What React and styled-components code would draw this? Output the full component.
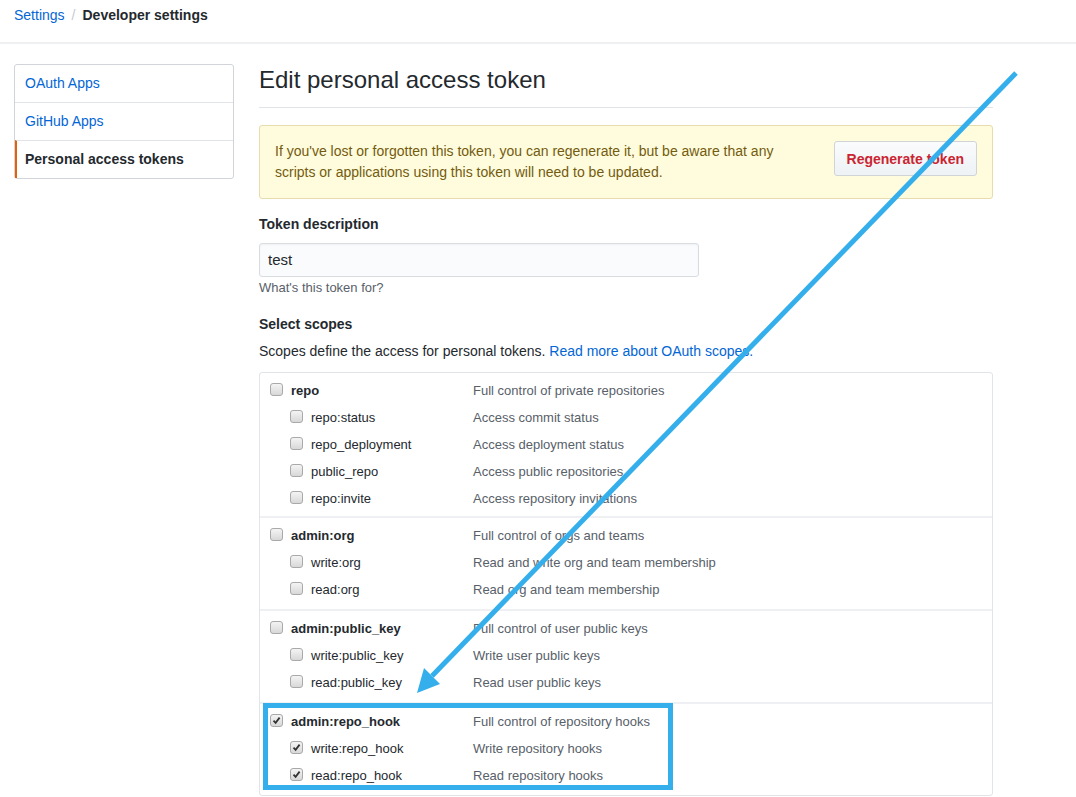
import React from 'react'
import styled, { createGlobalStyle } from 'styled-components'

const GlobalStyle = createGlobalStyle`
  html, body {
    margin: 0;
    background: #fff;
    font-family: "Liberation Sans", Arial, sans-serif;
    font-size: 14px;
    color: #24292e;
  }
`;

const Page = styled.div`
  position: relative;
  width: 1076px;
  min-height: 797px;
  overflow: hidden;
`;

const Breadcrumb = styled.div`
  height: 44px;
  padding: 5px 14px 0;
  box-sizing: border-box;
  line-height: 20px;
  font-size: 14px;
  border-bottom: 2px solid #eff0f2;
`;

const Crumb = styled.a`
  color: #0366d6;
  text-decoration: none;
`;

const Sep = styled.span`
  color: #c6cbd1;
  margin: 0 7px;
`;

const Current = styled.strong`
  color: #24292e;
`;

const Container = styled.div`
  display: flex;
  gap: 25px;
  padding: 20px 0 0 14px;
`;

const SideNav = styled.nav`
  width: 218px;
  align-self: flex-start;
  border: 1px solid #d1d5da;
  border-radius: 3px;
`;

const NavItem = styled.a`
  display: block;
  height: 37px;
  line-height: 36px;
  padding-left: ${p => (p.$active ? '8px' : '10px')};
  font-size: 14px;
  color: ${p => (p.$active ? '#24292e' : '#0366d6')};
  font-weight: ${p => (p.$active ? 'bold' : 'normal')};
  border-left: ${p => (p.$active ? '2px solid #e36209' : 'none')};
  border-top: ${p => (p.$first ? 'none' : '1px solid #e1e4e8')};
  text-decoration: none;
`;

const Main = styled.main`
  width: 734px;
`;

const Heading = styled.h2`
  margin: 0;
  padding: 1px 0 12px;
  font-size: 24px;
  font-weight: normal;
  line-height: 30px;
  color: #24292e;
  border-bottom: 1px solid #e1e4e8;
`;

const Flash = styled.div`
  margin-top: 17px;
  display: flex;
  justify-content: space-between;
  align-items: flex-start;
  padding: 15px;
  background: #fffbdd;
  border: 1px solid #e6dcae;
  border-radius: 3px;
  color: #735c0f;
  line-height: 21px;
  font-size: 14px;
`;

const FlashText = styled.p`
  margin: 0;
  width: 520px;
`;

const Button = styled.button`
  height: 35px;
  padding: 0 12px;
  font-family: inherit;
  font-size: 14px;
  font-weight: bold;
  color: #cb2431;
  background: linear-gradient(#fafbfc, #eff3f6 90%);
  border: 1px solid #d1d4d7;
  border-radius: 3px;
`;

const Label = styled.div`
  margin-top: ${p => p.$top || 0}px;
  font-weight: bold;
  line-height: 20px;
  font-size: 14px;
`;

const Input = styled.div`
  margin-top: 9px;
  width: 440px;
  height: 34px;
  box-sizing: border-box;
  padding: 0 8px;
  line-height: 31px;
  font-size: 15px;
  background: #fafbfc;
  border: 1px solid #d9dde2;
  border-radius: 3px;
  box-shadow: inset 0 1px 2px rgba(27, 31, 35, 0.05);
`;

const Note = styled.p`
  margin: 2px 0 0;
  font-size: 13px;
  line-height: 18px;
  color: #586069;
`;

const Lead = styled.p`
  margin: 7px 0 0;
  line-height: 20px;
  font-size: 14px;
  color: #24292e;
`;

const Link = styled.a`
  color: #0366d6;
  text-decoration: none;
`;

const ScopeTable = styled.div`
  margin-top: 11px;
  border: 1px solid #e1e4e8;
  border-radius: 3px;
`;

const Group = styled.ul`
  list-style: none;
  margin: 0;
  padding: ${p => (p.$first ? '4px 0 4px' : '4px 0 6px')};
  border-top: ${p => (p.$first ? 'none' : '2px solid #eef0f3')};
`;

const Row = styled.li`
  display: flex;
  align-items: center;
  height: 27px;
  padding-left: ${p => (p.$child ? 30 : 10)}px;
  font-size: 13px;
`;

const Box = styled.span`
  width: 13px;
  height: 13px;
  box-sizing: border-box;
  border: 1px solid #a9a9a9;
  border-radius: 3px;
  background: linear-gradient(#f4f4f4, #d8d8d8);
  margin: 0 8px 2px 0;
  display: flex;
  align-items: center;
  justify-content: center;
`;

const ScopeName = styled.span`
  width: ${p => (p.$child ? 162 : 182)}px;
  font-weight: ${p => (p.$child ? 'normal' : 'bold')};
  color: #24292e;
`;

const ScopeDesc = styled.span`
  color: #586069;
`;

const Highlight = styled.div`
  position: absolute;
  left: 263px;
  top: 703px;
  width: 410px;
  height: 87px;
  box-sizing: border-box;
  border: 5px solid #35afec;
  pointer-events: none;
`;

const ArrowLayer = styled.svg`
  position: absolute;
  left: 0;
  top: 0;
  pointer-events: none;
`;

const Check = ({ checked }) => (
  <Box>
    {checked && (
      <svg width="9" height="9" viewBox="0 0 9 9">
        <path d="M1.5 4.6 L3.6 6.8 L7.6 1.6" fill="none" stroke="#333" strokeWidth="1.8" />
      </svg>
    )}
  </Box>
);

const groups = [
  [
    ['repo', 'Full control of private repositories'],
    ['repo:status', 'Access commit status'],
    ['repo_deployment', 'Access deployment status'],
    ['public_repo', 'Access public repositories'],
    ['repo:invite', 'Access repository invitations'],
  ],
  [
    ['admin:org', 'Full control of orgs and teams'],
    ['write:org', 'Read and write org and team membership'],
    ['read:org', 'Read org and team membership'],
  ],
  [
    ['admin:public_key', 'Full control of user public keys'],
    ['write:public_key', 'Write user public keys'],
    ['read:public_key', 'Read user public keys'],
  ],
  [
    ['admin:repo_hook', 'Full control of repository hooks', true],
    ['write:repo_hook', 'Write repository hooks', true],
    ['read:repo_hook', 'Read repository hooks', true],
  ],
];

export default function App() {
  return (
    <Page>
      <GlobalStyle />
      <Breadcrumb>
        <Crumb href="#">Settings</Crumb>
        <Sep>/</Sep>
        <Current>Developer settings</Current>
      </Breadcrumb>

      <Container>
        <SideNav>
          <NavItem href="#" $first>OAuth Apps</NavItem>
          <NavItem href="#">GitHub Apps</NavItem>
          <NavItem href="#" $active>Personal access tokens</NavItem>
        </SideNav>

        <Main>
          <Heading>Edit personal access token</Heading>

          <Flash>
            <FlashText>
              If you've lost or forgotten this token, you can regenerate it, but be aware that any
              scripts or applications using this token will need to be updated.
            </FlashText>
            <Button>Regenerate token</Button>
          </Flash>

          <Label $top={15}>Token description</Label>
          <Input>test</Input>
          <Note>What's this token for?</Note>

          <Label $top={17}>Select scopes</Label>
          <Lead>
            Scopes define the access for personal tokens. <Link href="#">Read more about OAuth scopes.</Link>
          </Lead>

          <ScopeTable>
            {groups.map((rows, gi) => (
              <Group key={gi} $first={gi === 0}>
                {rows.map(([name, desc, checked], i) => (
                  <Row key={name} $child={i > 0}>
                    <Check checked={checked} />
                    <ScopeName $child={i > 0}>{name}</ScopeName>
                    <ScopeDesc>{desc}</ScopeDesc>
                  </Row>
                ))}
              </Group>
            ))}
          </ScopeTable>
        </Main>
      </Container>

      <Highlight />
      <ArrowLayer width="1076" height="797">
        <line x1="1016" y1="73" x2="432" y2="676" stroke="#35afec" strokeWidth="5" />
        <polygon points="417,693 440,684 424,668" fill="#35afec" />
      </ArrowLayer>
    </Page>
  );
}
